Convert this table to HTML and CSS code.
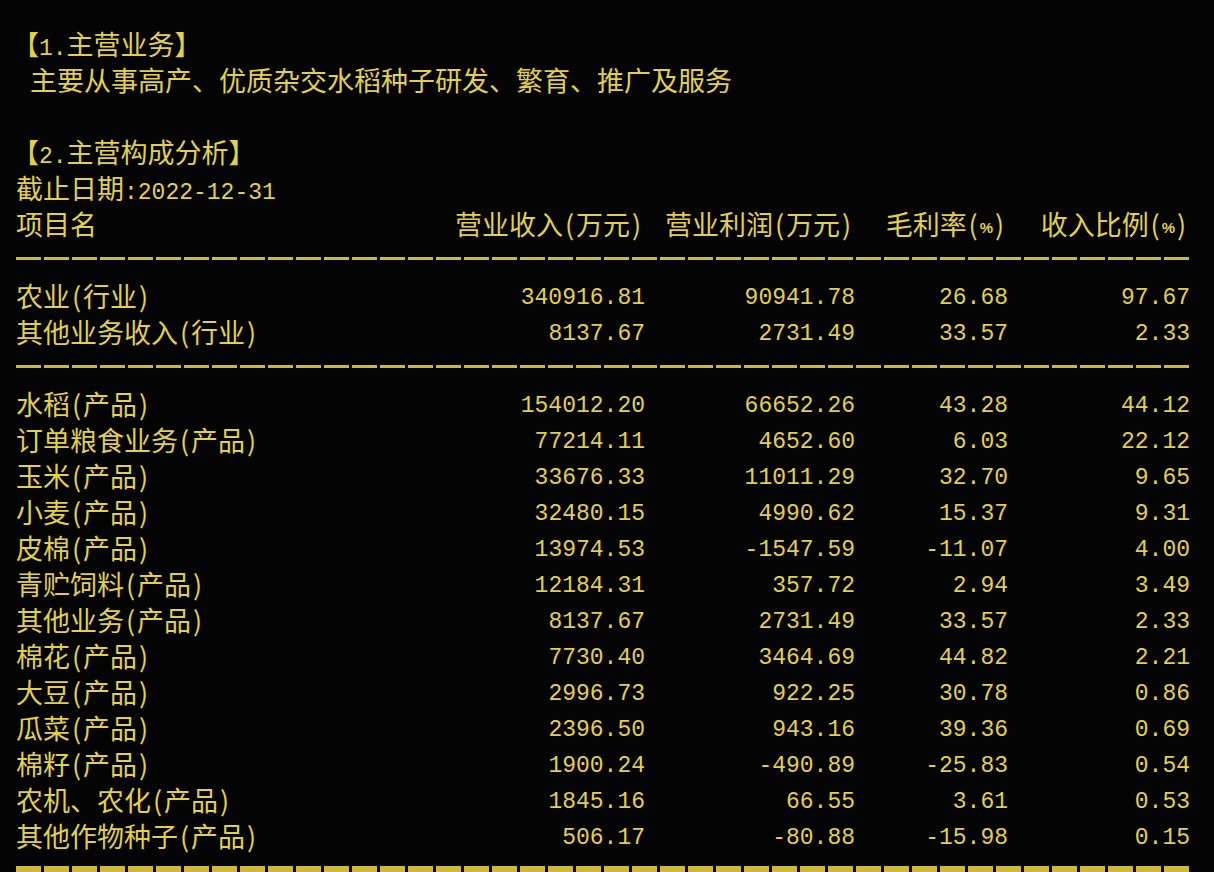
FILE: index.html
```html
<!DOCTYPE html>
<html lang="zh-CN">
<head>
<meta charset="utf-8">
<title>主营构成分析</title>
<link rel="stylesheet" href="styles.css">
</head>
<body>
<div class="screen">
  <div class="line title">【<span class="num">1.</span>主营业务】</div>
  <div class="line indent">主要从事高产、优质杂交水稻种子研发、繁育、推广及服务</div>
  <div class="line"></div>
  <div class="line title">【<span class="num">2.</span>主营构成分析】</div>
  <div class="line">截止日期<span class="num">:2022-12-31</span></div>

  <div class="table">
    <div class="cell label">项目名</div>
    <div class="cell head">营业收入<span class="p">(</span>万元<span class="p">)</span></div>
    <div class="cell head">营业利润<span class="p">(</span>万元<span class="p">)</span></div>
    <div class="cell head">毛利率<span class="p">(</span><span class="pct">%</span><span class="p">)</span></div>
    <div class="cell head">收入比例<span class="p">(</span><span class="pct">%</span><span class="p">)</span></div>

    <div class="rule"></div>

    <div class="cell label">农业<span class="p">(</span>行业<span class="p">)</span></div>
    <div class="cell val">340916.81</div><div class="cell val">90941.78</div><div class="cell val">26.68</div><div class="cell val">97.67</div>
    <div class="cell label">其他业务收入<span class="p">(</span>行业<span class="p">)</span></div>
    <div class="cell val">8137.67</div><div class="cell val">2731.49</div><div class="cell val">33.57</div><div class="cell val">2.33</div>

    <div class="rule"></div>

    <div class="cell label">水稻<span class="p">(</span>产品<span class="p">)</span></div>
    <div class="cell val">154012.20</div><div class="cell val">66652.26</div><div class="cell val">43.28</div><div class="cell val">44.12</div>
    <div class="cell label">订单粮食业务<span class="p">(</span>产品<span class="p">)</span></div>
    <div class="cell val">77214.11</div><div class="cell val">4652.60</div><div class="cell val">6.03</div><div class="cell val">22.12</div>
    <div class="cell label">玉米<span class="p">(</span>产品<span class="p">)</span></div>
    <div class="cell val">33676.33</div><div class="cell val">11011.29</div><div class="cell val">32.70</div><div class="cell val">9.65</div>
    <div class="cell label">小麦<span class="p">(</span>产品<span class="p">)</span></div>
    <div class="cell val">32480.15</div><div class="cell val">4990.62</div><div class="cell val">15.37</div><div class="cell val">9.31</div>
    <div class="cell label">皮棉<span class="p">(</span>产品<span class="p">)</span></div>
    <div class="cell val">13974.53</div><div class="cell val">-1547.59</div><div class="cell val">-11.07</div><div class="cell val">4.00</div>
    <div class="cell label">青贮饲料<span class="p">(</span>产品<span class="p">)</span></div>
    <div class="cell val">12184.31</div><div class="cell val">357.72</div><div class="cell val">2.94</div><div class="cell val">3.49</div>
    <div class="cell label">其他业务<span class="p">(</span>产品<span class="p">)</span></div>
    <div class="cell val">8137.67</div><div class="cell val">2731.49</div><div class="cell val">33.57</div><div class="cell val">2.33</div>
    <div class="cell label">棉花<span class="p">(</span>产品<span class="p">)</span></div>
    <div class="cell val">7730.40</div><div class="cell val">3464.69</div><div class="cell val">44.82</div><div class="cell val">2.21</div>
    <div class="cell label">大豆<span class="p">(</span>产品<span class="p">)</span></div>
    <div class="cell val">2996.73</div><div class="cell val">922.25</div><div class="cell val">30.78</div><div class="cell val">0.86</div>
    <div class="cell label">瓜菜<span class="p">(</span>产品<span class="p">)</span></div>
    <div class="cell val">2396.50</div><div class="cell val">943.16</div><div class="cell val">39.36</div><div class="cell val">0.69</div>
    <div class="cell label">棉籽<span class="p">(</span>产品<span class="p">)</span></div>
    <div class="cell val">1900.24</div><div class="cell val">-490.89</div><div class="cell val">-25.83</div><div class="cell val">0.54</div>
    <div class="cell label">农机、农化<span class="p">(</span>产品<span class="p">)</span></div>
    <div class="cell val">1845.16</div><div class="cell val">66.55</div><div class="cell val">3.61</div><div class="cell val">0.53</div>
    <div class="cell label">其他作物种子<span class="p">(</span>产品<span class="p">)</span></div>
    <div class="cell val">506.17</div><div class="cell val">-80.88</div><div class="cell val">-15.98</div><div class="cell val">0.15</div>

    <div class="blocks"></div>
  </div>
</div>
</body>
</html>
```

FILE: styles.css
```css
html, body {
  margin: 0;
  padding: 0;
  background: #040404;
  height: 100%;
  overflow: hidden;
}

.screen {
  padding: 26px 0 0 16px;
  color: #e2d146;
  font-family: "Noto Sans CJK SC", "Noto Sans", sans-serif;
  font-size: 27px;
  font-weight: 400;
}

.line {
  height: 36px;
  line-height: 36px;
  white-space: nowrap;
}

.title {
  margin-left: -4px;
}

.indent {
  padding-left: 14px;
}

.num, .val {
  font-family: "Liberation Mono", "DejaVu Sans Mono", monospace;
  font-size: 23px;
}

.table {
  display: grid;
  grid-template-columns: 419px 210px 210px 153px 182px;
  grid-auto-rows: 36px;
}

.cell {
  line-height: 36px;
  white-space: nowrap;
}

.label {
  text-align: left;
}

.head {
  text-align: right;
  padding-right: 2px;
}

.val {
  text-align: right;
  padding-top: 2px;
}

.p {
  display: inline-block;
  width: 13px;
  text-align: center;
}

.pct {
  font-size: 15px;
  font-family: "Liberation Sans", sans-serif;
  font-weight: 700;
  vertical-align: 2px;
}

.rule {
  grid-column: 1 / -1;
  align-self: center;
  width: 1174px;
  height: 3px;
  margin-top: -3px;
  background: repeating-linear-gradient(90deg, #cdb93c 0 25px, transparent 25px 28px);
}

.blocks {
  grid-column: 1 / -1;
  width: 1174px;
  height: 10px;
  margin-top: 12px;
  background: repeating-linear-gradient(90deg, #cdb93c 0 25px, transparent 25px 28px);
}
```
